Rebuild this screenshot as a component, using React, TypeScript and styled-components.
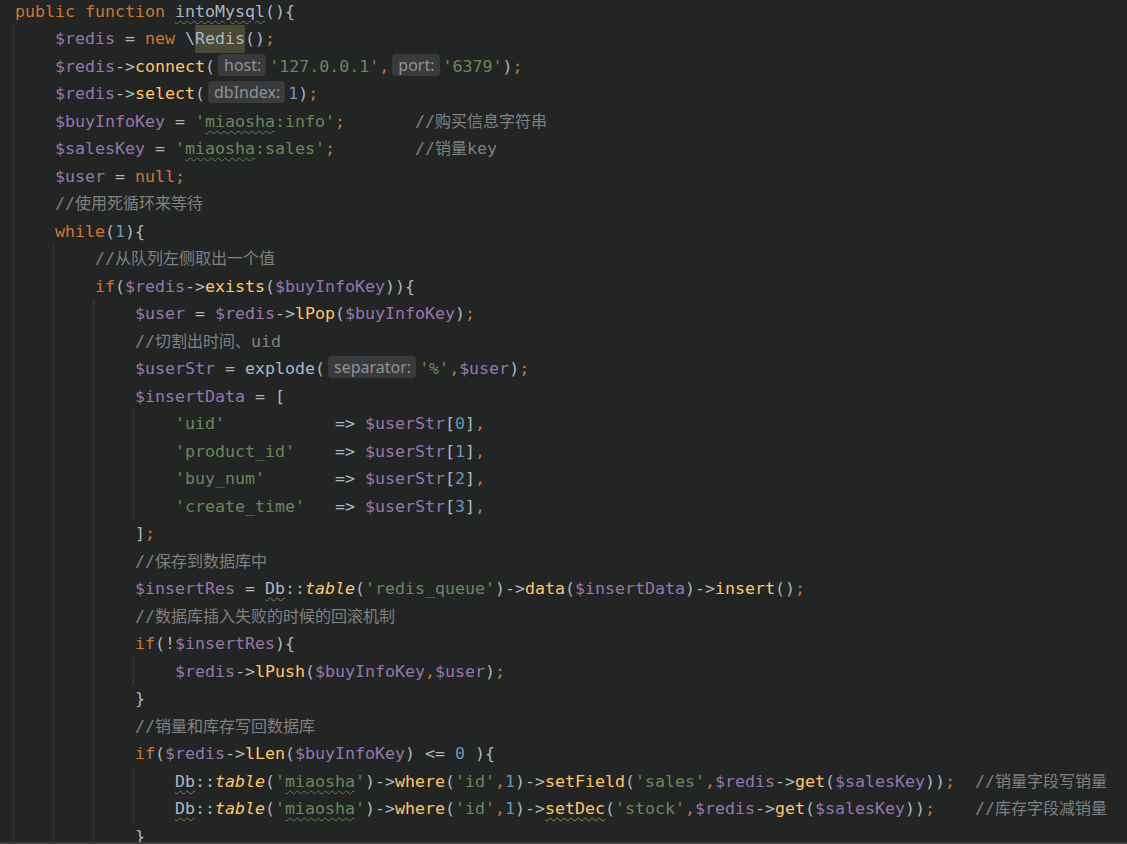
import * as React from "react";
import styled, { createGlobalStyle } from "styled-components";

const GlobalStyle = createGlobalStyle`
  html, body {
    margin: 0;
    padding: 0;
    background: #232525;
  }
`;

const Editor = styled.div`
  height: 842px;
  overflow: hidden;
  background: #232525;
  border-bottom: 2px solid #3b3d3f;
  color: #a9b7c6;
  font-family: "DejaVu Sans Mono", "Noto Sans CJK SC", monospace;
  font-size: 16.61px;
  line-height: 27.5px;
`;

const Code = styled.div`
  margin-top: -2.5px;
`;

const Line = styled.div<{ $root?: boolean }>`
  height: 27.5px;
  padding-left: ${(p) => (p.$root ? 15 : 41)}px;
  white-space: pre;
`;

const Block = styled.div<{ $root?: boolean }>`
  margin-left: ${(p) => (p.$root ? 13 : 39)}px;
  border-left: 1px solid #373a3a;
`;

const Kw = styled.span`
  color: #cc7832;
`;

const V = styled.span`
  color: #9876aa;
`;

const Fn = styled.span<{ $italic?: boolean }>`
  color: #ffc66d;
  font-style: ${(p) => (p.$italic ? "italic" : "normal")};
`;

const S = styled.span`
  color: #6a8759;
`;

const N = styled.span`
  color: #6897bb;
`;

const Cm = styled.span`
  color: #808080;
`;

const Cjk = styled.span`
  font-family: "Noto Sans CJK SC", sans-serif;
  font-size: 16px;
  line-height: 1;
`;

const Typo = styled.span<{ $tone?: string }>`
  text-decoration: underline wavy ${(p) => p.$tone || "#7d7a4f"};
  text-decoration-thickness: 1px;
  text-underline-offset: 3px;
`;

const Caret = styled.span`
  display: inline-block;
  height: 27.5px;
  background: #4b4a36;
`;

const Hint = styled.span`
  display: inline-block;
  height: 22px;
  line-height: 22px;
  margin: 0 3px;
  padding: 0 5px 0 6px;
  border-radius: 4px;
  background: #383a3b;
  color: #8f9296;
  font-family: "Noto Sans", "Open Sans", sans-serif;
  font-size: 16px;
  vertical-align: 1px;
`;

const GREEN = "#5f7f4c";

const App = () => {
  return (
    <>
      <GlobalStyle />
      <Editor>
        <Code>
          <Line $root>
            <Kw>public function </Kw>
            <Typo>intoMysql</Typo>(){"{"}
          </Line>
          <Block $root>
            <Line>
              <V>$redis</V> = <Kw>new</Kw> \<Caret>Redis</Caret>()<Kw>;</Kw>
            </Line>
            <Line>
              <V>$redis</V>-&gt;<Fn>connect</Fn>(<Hint>host:</Hint>
              <S>'127.0.0.1'</S>
              <Kw>,</Kw>
              <Hint>port:</Hint>
              <S>'6379'</S>)<Kw>;</Kw>
            </Line>
            <Line>
              <V>$redis</V>-&gt;<Fn>select</Fn>(<Hint>dbIndex:</Hint>
              <N>1</N>)<Kw>;</Kw>
            </Line>
            <Line>
              <V>$buyInfoKey</V> = <S>'<Typo $tone={GREEN}>miaosha</Typo>:info'</S>
              <Kw>;</Kw>
              {"       "}
              <Cm>
                //<Cjk>购买信息字符串</Cjk>
              </Cm>
            </Line>
            <Line>
              <V>$salesKey</V> = <S>'<Typo $tone={GREEN}>miaosha</Typo>:sales'</S>
              <Kw>;</Kw>
              {"        "}
              <Cm>
                //<Cjk>销量</Cjk>key
              </Cm>
            </Line>
            <Line>
              <V>$user</V> = <Kw>null;</Kw>
            </Line>
            <Line>
              <Cm>
                //<Cjk>使用死循环来等待</Cjk>
              </Cm>
            </Line>
            <Line>
              <Kw>while</Kw>(<N>1</N>){"{"}
            </Line>
            <Block>
              <Line>
                <Cm>
                  //<Cjk>从队列左侧取出一个值</Cjk>
                </Cm>
              </Line>
              <Line>
                <Kw>if</Kw>(<V>$redis</V>-&gt;<Fn>exists</Fn>(<V>$buyInfoKey</V>)){"{"}
              </Line>
              <Block>
                <Line>
                  <V>$user</V> = <V>$redis</V>-&gt;<Fn>lPop</Fn>(<V>$buyInfoKey</V>)<Kw>;</Kw>
                </Line>
                <Line>
                  <Cm>
                    //<Cjk>切割出时间、</Cjk>uid
                  </Cm>
                </Line>
                <Line>
                  <V>$userStr</V> = explode(<Hint>separator:</Hint>
                  <S>'%'</S>
                  <Kw>,</Kw>
                  <V>$user</V>)<Kw>;</Kw>
                </Line>
                <Line>
                  <V>$insertData</V> = [
                </Line>
                <Block>
                  <Line>
                    <S>'uid'</S>
                    {"           => "}
                    <V>$userStr</V>[<N>0</N>]<Kw>,</Kw>
                  </Line>
                  <Line>
                    <S>'product_id'</S>
                    {"    => "}
                    <V>$userStr</V>[<N>1</N>]<Kw>,</Kw>
                  </Line>
                  <Line>
                    <S>'buy_num'</S>
                    {"       => "}
                    <V>$userStr</V>[<N>2</N>]<Kw>,</Kw>
                  </Line>
                  <Line>
                    <S>'create_time'</S>
                    {"   => "}
                    <V>$userStr</V>[<N>3</N>]<Kw>,</Kw>
                  </Line>
                </Block>
                <Line>
                  ]<Kw>;</Kw>
                </Line>
                <Line>
                  <Cm>
                    //<Cjk>保存到数据库中</Cjk>
                  </Cm>
                </Line>
                <Line>
                  <V>$insertRes</V> = <Typo>Db</Typo>::<Fn $italic>table</Fn>(
                  <S>'redis_queue'</S>)-&gt;<Fn>data</Fn>(<V>$insertData</V>)-&gt;
                  <Fn>insert</Fn>()<Kw>;</Kw>
                </Line>
                <Line>
                  <Cm>
                    //<Cjk>数据库插入失败的时候的回滚机制</Cjk>
                  </Cm>
                </Line>
                <Line>
                  <Kw>if</Kw>(!<V>$insertRes</V>){"{"}
                </Line>
                <Block>
                  <Line>
                    <V>$redis</V>-&gt;<Fn>lPush</Fn>(<V>$buyInfoKey</V>
                    <Kw>,</Kw>
                    <V>$user</V>)<Kw>;</Kw>
                  </Line>
                </Block>
                <Line>{"}"}</Line>
                <Line>
                  <Cm>
                    //<Cjk>销量和库存写回数据库</Cjk>
                  </Cm>
                </Line>
                <Line>
                  <Kw>if</Kw>(<V>$redis</V>-&gt;<Fn>lLen</Fn>(<V>$buyInfoKey</V>) &lt;= <N>0</N> ){"{"}
                </Line>
                <Block>
                  <Line>
                    <Typo>Db</Typo>::<Fn $italic>table</Fn>(
                    <S>'<Typo $tone={GREEN}>miaosha</Typo>'</S>)-&gt;<Fn>where</Fn>(<S>'id'</S>
                    <Kw>,</Kw>
                    <N>1</N>)-&gt;<Fn>setField</Fn>(<S>'sales'</S>
                    <Kw>,</Kw>
                    <V>$redis</V>-&gt;<Fn>get</Fn>(<V>$salesKey</V>))<Kw>;</Kw>
                    {"  "}
                    <Cm>
                      //<Cjk>销量字段写销量</Cjk>
                    </Cm>
                  </Line>
                  <Line>
                    <Typo>Db</Typo>::<Fn $italic>table</Fn>(
                    <S>'<Typo $tone={GREEN}>miaosha</Typo>'</S>)-&gt;<Fn>where</Fn>(<S>'id'</S>
                    <Kw>,</Kw>
                    <N>1</N>)-&gt;
                    <Typo $tone="#8a8a5c">
                      <Fn>setDec</Fn>
                    </Typo>
                    (<S>'stock'</S>
                    <Kw>,</Kw>
                    <V>$redis</V>-&gt;<Fn>get</Fn>(<V>$salesKey</V>))<Kw>;</Kw>
                    {"    "}
                    <Cm>
                      //<Cjk>库存字段减销量</Cjk>
                    </Cm>
                  </Line>
                </Block>
                <Line>{"}"}</Line>
              </Block>
            </Block>
          </Block>
        </Code>
      </Editor>
    </>
  );
};

export default App;
